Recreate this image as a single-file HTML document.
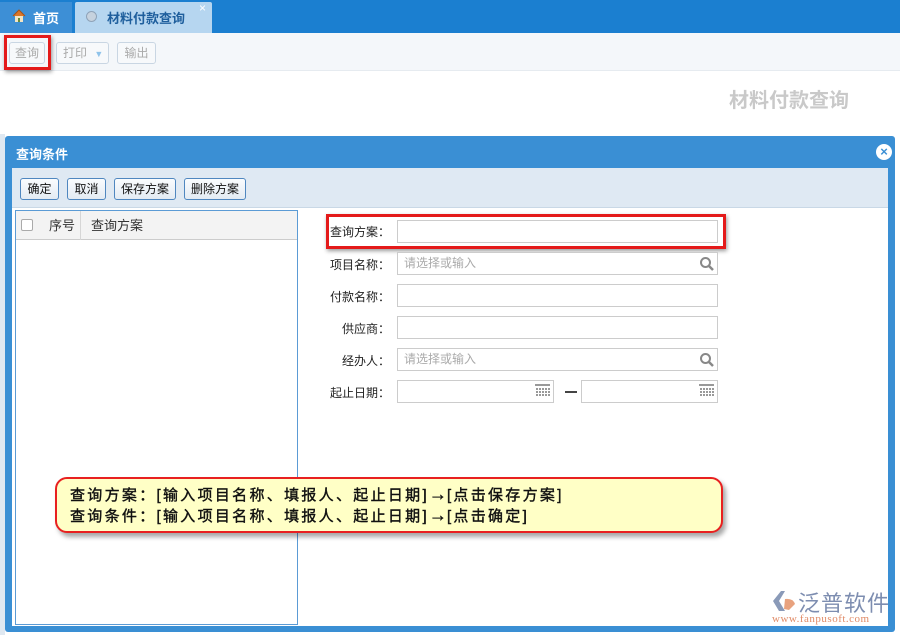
<!DOCTYPE html>
<html><head><meta charset="utf-8"><style>
*{margin:0;padding:0;box-sizing:border-box}
body{width:900px;height:635px;overflow:hidden;background:#fff;font-family:"Liberation Sans","Noto Sans CJK SC",sans-serif;font-size:12px;color:#222;position:relative}
.a{position:absolute}
.tabbar{left:0;top:0;width:900px;height:33px;background:#1b7fd0}
.btn{position:absolute;border:1px solid #c9d6e3;border-radius:3px;background:#f7f9fb;color:#aaa;font-size:12px;text-align:center;line-height:20px;height:22px}
.dbtn{position:absolute;top:178px;height:22px;border:1px solid #4f87c0;border-radius:3px;background:linear-gradient(#fafcfe,#e3ebf3);font-size:12px;text-align:center;line-height:20px;color:#111}
.lbl{position:absolute;width:90px;left:300px;text-align:right;font-size:12px;color:#222}
.inp{position:absolute;left:397px;width:321px;height:23px;border:1px solid #ccc;background:#fff;color:#aaa;font-size:12px;line-height:21px;padding-left:6px}
.ar{font-size:18px;font-weight:normal;letter-spacing:0;line-height:15px}
</style></head><body>
<div class="a tabbar"></div>
<div class="a" style="left:0;top:2px;width:72px;height:31px;background:#3d8fd6"></div>
<div class="a" style="left:12px;top:9px;width:14px;height:13px;">
<svg width="14" height="13"><path d="M1 7L7 1L13 7" fill="#d9762a" stroke="#a5521a"/><rect x="3" y="7" width="8" height="6" fill="#f2e4c4"/><rect x="6" y="9" width="2" height="4" fill="#6a8c3a"/></svg></div>
<div class="a" style="left:33px;top:8px;color:#fff;font-weight:bold;font-size:13px">首页</div>
<div class="a" style="left:75px;top:2px;width:137px;height:31px;background:#b6d6f0;border-radius:2px 2px 0 0"></div>
<div class="a" style="left:86px;top:11px;width:11px;height:11px;border-radius:50%;background:#c6d2de;border:1px solid #8fa3b8"></div>
<div class="a" style="left:107px;top:8px;color:#1f5f9d;font-weight:bold;font-size:13px">材料付款查询</div>
<div class="a" style="left:199px;top:1px;color:#fff;font-size:12px">×</div>
<div class="a" style="left:0;top:33px;width:900px;height:38px;background:#f4f7fa;border-bottom:1px solid #e6ebf0"></div>
<div class="btn" style="left:9px;top:42px;width:36px">查询</div>
<div class="a" style="left:4px;top:35px;width:47px;height:35px;border:3px solid #e41a1a;box-shadow:1px 2px 4px rgba(0,0,0,.4)"></div>
<div class="btn" style="left:56px;top:42px;width:53px;text-align:left;padding-left:6px">打印 <span style="color:#8fc3ea;font-size:9px;margin-left:4px">▼</span></div>
<div class="btn" style="left:117px;top:42px;width:39px">输出</div>
<div class="a" style="left:729px;top:84px;font-size:20px;font-weight:bold;color:#c9c9c9">材料付款查询</div>
<div class="a" style="left:0;top:134px;width:5px;height:501px;background:#dfe8f1"></div>
<div class="a" style="left:5px;top:136px;width:890px;height:496px;background:#3a8fd4;border-radius:3px"></div>
<div class="a" style="left:16px;top:144px;color:#fff;font-weight:bold;font-size:13px">查询条件</div>
<div class="a" style="left:876px;top:144px;width:16px;height:16px;border-radius:50%;background:#fff;color:#3a8fd4;font-size:13px;line-height:15px;text-align:center;font-weight:bold">×</div>
<div class="a" style="left:12px;top:168px;width:876px;height:458px;background:#fff"></div>
<div class="a" style="left:12px;top:168px;width:876px;height:40px;background:#dfe9f3;border-bottom:1px solid #c9d8e6"></div>
<div class="dbtn" style="left:20px;width:39px">确定</div>
<div class="dbtn" style="left:67px;width:39px">取消</div>
<div class="dbtn" style="left:114px;width:62px">保存方案</div>
<div class="dbtn" style="left:184px;width:62px">删除方案</div>
<div class="a" style="left:15px;top:210px;width:283px;height:415px;border:1px solid #5b9bd5;background:#fff"></div>
<div class="a" style="left:16px;top:211px;width:281px;height:29px;background:#f3f3f3;border-bottom:1px solid #ccc"></div>
<div class="a" style="left:21px;top:219px;width:12px;height:12px;border:1px solid #aaa;background:#fff;border-radius:2px"></div>
<div class="a" style="left:80px;top:211px;width:1px;height:29px;background:#d6d6d6"></div>
<div class="a" style="left:49px;top:215px;font-size:13px;color:#333">序号</div>
<div class="a" style="left:91px;top:215px;font-size:13px;color:#333">查询方案</div>
<div class="lbl" style="top:223px">查询方案：</div>
<div class="inp" style="top:220px"></div>
<div class="a" style="left:326px;top:214px;width:400px;height:35px;border:3px solid #e41a1a;box-shadow:1px 2px 4px rgba(0,0,0,.4)"></div>
<div class="lbl" style="top:256px">项目名称：</div>
<div class="inp" style="top:252px">请选择或输入</div>
<div class="lbl" style="top:288px">付款名称：</div>
<div class="inp" style="top:284px"></div>
<div class="lbl" style="top:320px">供应商：</div>
<div class="inp" style="top:316px"></div>
<div class="lbl" style="top:352px">经办人：</div>
<div class="inp" style="top:348px">请选择或输入</div>
<svg class="a" style="left:699px;top:256px" width="16" height="16"><circle cx="6.5" cy="6.5" r="4.5" fill="none" stroke="#888" stroke-width="2"/><path d="M10 10L14 14" stroke="#888" stroke-width="2.5"/></svg>
<svg class="a" style="left:699px;top:352px" width="16" height="16"><circle cx="6.5" cy="6.5" r="4.5" fill="none" stroke="#888" stroke-width="2"/><path d="M10 10L14 14" stroke="#888" stroke-width="2.5"/></svg>
<div class="lbl" style="top:384px">起止日期：</div>
<div class="inp" style="top:380px;width:157px"></div>
<div class="a" style="left:565px;top:391px;width:12px;height:2px;background:#444"></div>
<div class="inp" style="top:380px;left:581px;width:137px"></div>
<svg class="a" style="left:535px;top:384px" width="15" height="14"><rect x="0" y="0" width="15" height="2" fill="#999"/><g fill="#999"><rect x="1" y="4" width="2" height="2"/><rect x="4" y="4" width="2" height="2"/><rect x="7" y="4" width="2" height="2"/><rect x="10" y="4" width="2" height="2"/><rect x="13" y="4" width="2" height="2"/><rect x="1" y="7" width="2" height="2"/><rect x="4" y="7" width="2" height="2"/><rect x="7" y="7" width="2" height="2"/><rect x="10" y="7" width="2" height="2"/><rect x="13" y="7" width="2" height="2"/><rect x="1" y="10" width="2" height="2"/><rect x="4" y="10" width="2" height="2"/><rect x="7" y="10" width="2" height="2"/><rect x="10" y="10" width="2" height="2"/><rect x="13" y="10" width="2" height="2"/></g></svg>
<svg class="a" style="left:699px;top:384px" width="15" height="14"><rect x="0" y="0" width="15" height="2" fill="#999"/><g fill="#999"><rect x="1" y="4" width="2" height="2"/><rect x="4" y="4" width="2" height="2"/><rect x="7" y="4" width="2" height="2"/><rect x="10" y="4" width="2" height="2"/><rect x="13" y="4" width="2" height="2"/><rect x="1" y="7" width="2" height="2"/><rect x="4" y="7" width="2" height="2"/><rect x="7" y="7" width="2" height="2"/><rect x="10" y="7" width="2" height="2"/><rect x="13" y="7" width="2" height="2"/><rect x="1" y="10" width="2" height="2"/><rect x="4" y="10" width="2" height="2"/><rect x="7" y="10" width="2" height="2"/><rect x="10" y="10" width="2" height="2"/><rect x="13" y="10" width="2" height="2"/></g></svg>
<div class="a" style="left:55px;top:477px;width:668px;height:56px;background:#ffffc6;border:2px solid #e82020;border-radius:12px;box-shadow:3px 4px 5px rgba(0,0,0,.35);padding:6px 0 0 13px;font-size:15px;line-height:21px;color:#111;font-weight:normal;-webkit-text-stroke:0.4px #111;letter-spacing:2.3px;white-space:nowrap">查询方案：[输入项目名称、填报人、起止日期]<span class="ar">→</span>[点击保存方案]<br>查询条件：[输入项目名称、填报人、起止日期]<span class="ar">→</span>[点击确定]</div>
<svg class="a" style="left:771px;top:590px" width="26" height="22"><path d="M10 1L2 11L8 21L14 21L8 11L14 1Z" fill="#8a9ab8"/><path d="M14 9Q22 8 24 14L18 20L13 19Z" fill="#e8a27e"/></svg>
<div class="a" style="left:798px;top:586px;font-size:22px;color:#7d8db0;letter-spacing:1px">泛普软件</div>
<div class="a" style="left:772px;top:613px;font-size:11px;color:#e08a66;font-family:'Liberation Serif',serif;letter-spacing:.5px">www.fanpusoft.com</div>
</body></html>
